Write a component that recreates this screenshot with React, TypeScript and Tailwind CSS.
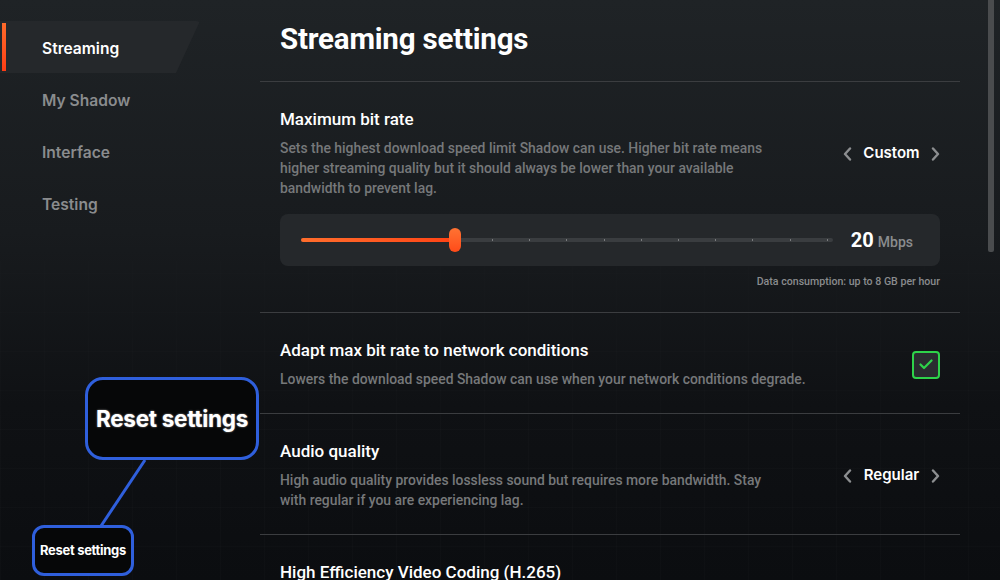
import React from "react";

const Chevron = ({ dir }: { dir: "left" | "right" }) => (
  <svg width="9" height="14" viewBox="0 0 9 14" fill="none">
    {dir === "left" ? (
      <path d="M7 1.5L2 7l5 5.5" stroke="#8c8e90" strokeWidth="2.4" strokeLinecap="round" strokeLinejoin="round" />
    ) : (
      <path d="M2 1.5L7 7l-5 5.5" stroke="#8c8e90" strokeWidth="2.4" strokeLinecap="round" strokeLinejoin="round" />
    )}
  </svg>
);

const Picker = ({ value }: { value: string }) => (
  <div className="flex items-center gap-[10px] font-['Inter',sans-serif]">
    <Chevron dir="left" />
    <span className="w-[59px] text-center text-[15px] font-semibold text-white">{value}</span>
    <Chevron dir="right" />
  </div>
);

const NavItem = ({ label, active }: { label: string; active?: boolean }) => (
  <div className="relative h-[52px] flex items-center">
    {active && (
      <>
        <div className="absolute inset-y-0 left-0 w-[200px] bg-[#25282b] rounded-tr-[4px] [clip-path:polygon(0_0,100%_0,88%_100%,0_100%)]" />
        <div className="absolute left-[2px] top-[2px] bottom-[2px] w-[4px] bg-gradient-to-b from-[#ff6a2a] to-[#ff3c14]" />
      </>
    )}
    <span
      className={
        "relative pl-[42px] pt-[3px] text-[15.6px] font-semibold font-['Inter',sans-serif] " +
        (active ? "text-white" : "text-[#8a8c8e]")
      }
    >
      {label}
    </span>
  </div>
);

const ticks = Array.from({ length: 15 }, (_, k) => 5 + 37.2 * k);

const Title = ({ children }: { children: React.ReactNode }) => (
  <div className="text-[17px] leading-[20px] font-medium text-white">{children}</div>
);

const Desc = ({ children }: { children: React.ReactNode }) => (
  <p className="mt-[9px] text-[13.9px] leading-[20px] font-medium text-[#76787a]">{children}</p>
);

export default function App() {
  return (
    <div className="relative w-[1000px] h-[580px] overflow-hidden flex bg-[linear-gradient(180deg,#1f2326_0%,#181b1e_40%,#0f1114_70%,#0b0d10_100%)] font-['Roboto',sans-serif]">
      {/* faint grid */}
      <div className="pointer-events-none absolute inset-0 opacity-60 bg-[linear-gradient(rgba(255,255,255,0.025)_1px,transparent_1px),linear-gradient(90deg,rgba(255,255,255,0.025)_1px,transparent_1px)] bg-[size:44px_39px] [mask-image:linear-gradient(180deg,transparent_35%,black_75%)]" />

      {/* Sidebar */}
      <div className="relative w-[260px] shrink-0 pt-[21px] flex flex-col">
        <NavItem label="Streaming" active />
        <NavItem label="My Shadow" />
        <NavItem label="Interface" />
        <NavItem label="Testing" />
      </div>

      {/* Main */}
      <div className="relative w-[700px] shrink-0 flex flex-col">
        <div className="h-[82px] shrink-0 flex items-center px-5 border-b border-[#3b3d40]">
          <h1 className="text-[29.5px] font-bold text-white tracking-[-0.2px] leading-none mt-[-1px]">Streaming settings</h1>
        </div>

        {/* Max bit rate */}
        <div className="px-5 pt-[27px] pb-[23px] border-b border-[#3b3d40]">
          <div className="flex items-center justify-between">
            <div className="w-[488px]">
              <Title>Maximum bit rate</Title>
              <Desc>
                Sets the highest download speed limit Shadow can use. Higher bit rate means higher streaming quality but it should always be lower than your available bandwidth to prevent lag.
              </Desc>
            </div>
            <Picker value="Custom" />
          </div>
          <div className="mt-4 h-[52px] rounded-lg bg-[#25282b] flex items-center pl-[21px] pr-[27px]">
            <div className="relative w-[532px] h-[4px] rounded-full bg-[#3a3d40]">
              {ticks.map((t, i) => (
                <div key={i} className="absolute top-[1px] w-[1px] h-[2px] bg-[#7a7c7e]" style={{ left: t }} />
              ))}
              <div className="absolute left-0 top-0 h-[4px] w-[154px] rounded-full bg-gradient-to-r from-[#ff6d2c] to-[#ff4214]" />
              <div className="absolute left-[148px] top-[-10px] w-[12px] h-[24px] rounded-full bg-gradient-to-b from-[#ff7232] to-[#ff4a18]" />
            </div>
            <div className="ml-auto flex items-baseline gap-[4px]">
              <span className="text-[20px] font-bold text-white">20</span>
              <span className="text-[14px] font-medium text-[#8a8c8e]">Mbps</span>
            </div>
          </div>
          <div className="mt-[9px] text-right text-[10.6px] leading-[14px] font-medium text-[#8a8c8e]">
            Data consumption: up to 8 GB per hour
          </div>
        </div>

        {/* Adapt */}
        <div className="px-5 pt-[27px] pb-[24px] border-b border-[#3b3d40]">
          <div className="flex items-center justify-between">
            <div>
              <Title>Adapt max bit rate to network conditions</Title>
              <Desc>Lowers the download speed Shadow can use when your network conditions degrade.</Desc>
            </div>
            <div className="w-[28px] h-[28px] rounded-[4px] border-2 border-[#2ed34a] bg-[#2a2d30] flex items-center justify-center">
              <svg width="14" height="11" viewBox="0 0 14 11" fill="none">
                <path d="M1.5 5.5L5 9l7.5-7.5" stroke="#2ed34a" strokeWidth="2.2" strokeLinecap="round" strokeLinejoin="round" />
              </svg>
            </div>
          </div>
        </div>

        {/* Audio */}
        <div className="px-5 pt-[27px] pb-[24px] border-b border-[#3b3d40]">
          <div className="flex items-center justify-between">
            <div className="w-[488px]">
              <Title>Audio quality</Title>
              <Desc>
                High audio quality provides lossless sound but requires more bandwidth. Stay with regular if you are experiencing lag.
              </Desc>
            </div>
            <Picker value="Regular" />
          </div>
        </div>

        {/* HEVC */}
        <div className="px-5 pt-[27px]">
          <Title>High Efficiency Video Coding (H.265)</Title>
        </div>
      </div>

      {/* Scrollbar */}
      <div className="ml-[28px] w-[6px] h-[252px] bg-[#4a4c4e] rounded-b-[2px]" />

      {/* Annotation */}
      <svg className="absolute left-0 top-0 pointer-events-none" width="1000" height="580">
        <line x1="145" y1="460" x2="101" y2="526" stroke="#2f5fdc" strokeWidth="3" />
      </svg>
      <div className="absolute left-[85px] top-[377px] w-[174px] h-[83px] rounded-[18px] border-[3px] border-[#2f5fdc] bg-[#060708] flex items-center justify-center">
        <span className="text-[22.5px] font-bold text-white font-['Inter',sans-serif] tracking-[-0.3px] [text-shadow:0_0_2px_rgba(255,255,255,0.6)]">Reset settings</span>
      </div>
      <div className="absolute left-[32px] top-[525px] w-[102px] h-[51px] rounded-[12px] border-[3px] border-[#2f5fdc] bg-[#060708] flex items-center justify-center">
        <span className="text-[13px] font-bold text-white font-['Inter',sans-serif] tracking-[-0.3px]">Reset settings</span>
      </div>
    </div>
  );
}
